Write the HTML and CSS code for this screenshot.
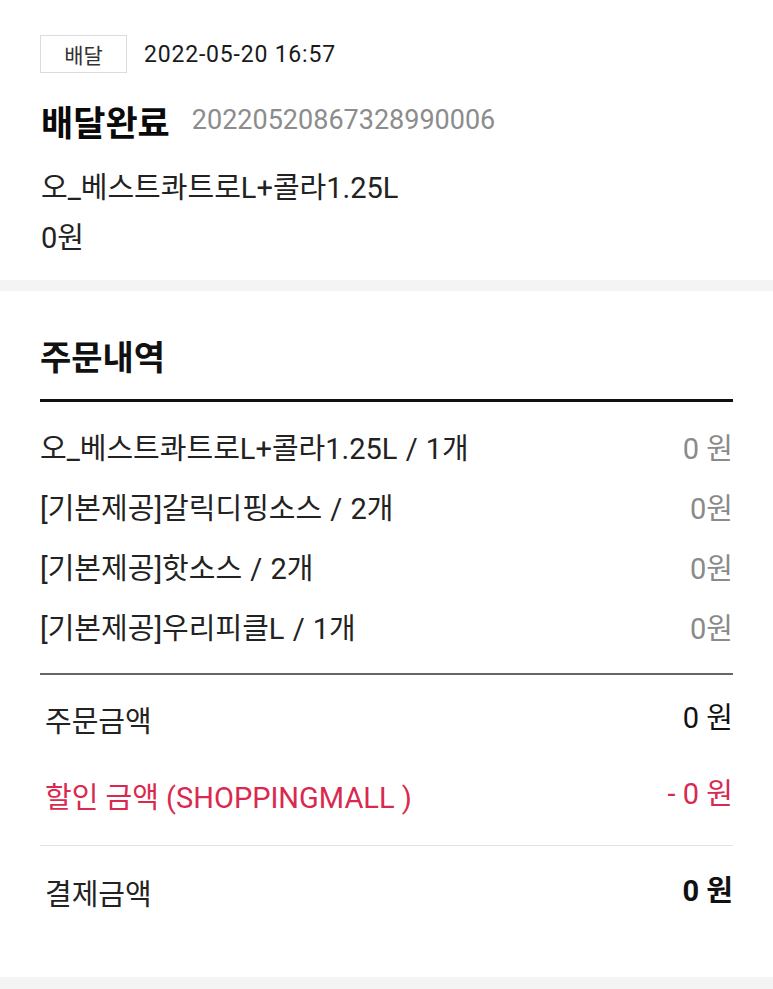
FILE: index.html
```html
<!DOCTYPE html>
<html lang="ko">
<head>
<meta charset="utf-8">
<link rel="stylesheet" href="styles.css">
</head>
<body>
<section class="summary-card">
  <div class="meta-row">
    <span class="badge">배달</span>
    <span class="date">2022-05-20 16:57</span>
  </div>
  <div class="status-row">
    <span class="status">배달완료</span>
    <span class="order-no">20220520867328990006</span>
  </div>
  <div class="product">오_베스트콰트로L+콜라1.25L</div>
  <div class="product-price">0원</div>
</section>
<div class="band"></div>
<section class="detail">
  <h2 class="detail-title">주문내역</h2>
  <ul class="items">
    <li class="item"><span class="item-name">오_베스트콰트로L+콜라1.25L / 1개</span><span class="item-price">0 원</span></li>
    <li class="item"><span class="item-name">[기본제공]갈릭디핑소스 / 2개</span><span class="item-price">0원</span></li>
    <li class="item"><span class="item-name">[기본제공]핫소스 / 2개</span><span class="item-price">0원</span></li>
    <li class="item"><span class="item-name">[기본제공]우리피클L / 1개</span><span class="item-price">0원</span></li>
  </ul>
  <div class="totals">
    <div class="total-row"><span class="t-label">주문금액</span><span class="t-value">0 원</span></div>
    <div class="total-row discount"><span class="t-label">할인 금액 (SHOPPINGMALL )</span><span class="t-value">- 0 원</span></div>
  </div>
  <div class="pay-row"><span class="t-label">결제금액</span><span class="t-value strong">0 원</span></div>
</section>
<div class="band bottom"></div>
</body>
</html>
```
FILE: styles.css
```css
* { box-sizing: border-box; }
html, body { margin: 0; padding: 0; background: #fff; }
body {
  font-family: Roboto, "Noto Sans CJK KR", "Noto Sans", sans-serif;
  color: #111;
  width: 773px;
}
.summary-card { padding: 35px 40px 0 41px; height: 280px; }
.meta-row { display: flex; align-items: center; height: 38px; }
.badge {
  display: flex; align-items: center; justify-content: center;
  width: 87px; height: 38px; margin-left: -1px;
  border: 1px solid #dcdcdc; font-size: 21px; color: #333;
}
.date { margin-left: 17px; font-size: 23px; color: #1a1a1a; letter-spacing: 0.8px; }
.status-row { display: flex; align-items: center; height: 50px; margin-top: 22px; }
.status { font-size: 35px; font-weight: 700; color: #0a0a0a; }
.order-no { margin-left: 22px; font-size: 27px; color: #8c8c8c; }
.product { margin-top: 16px; height: 48px; display: flex; align-items: center; font-size: 29px; color: #222; }
.product-price { margin-top: 2px; height: 48px; display: flex; align-items: center; font-size: 29px; color: #222; }
.band { height: 11px; background: #f4f4f4; }
.band.bottom { height: 12px; }
.detail { padding: 0 40px; height: 686px; }
.detail-title { margin: 0; padding-top: 47px; height: 108px; font-size: 34px; font-weight: 700; color: #111; line-height: 40px; }
.items { list-style: none; margin: 0; padding: 14px 0 17px; border-top: 3px solid #111; border-bottom: 2px solid #666; }
.item { display: flex; justify-content: space-between; align-items: center; height: 60px; }
.item-name { font-size: 29px; color: #222; letter-spacing: 0; word-spacing: 1px; }
.item-price { font-size: 29px; color: #8a8a8a; }
.totals { padding: 6px 0 12px; border-bottom: 1px solid #e3e3e3; }
.total-row { display: flex; justify-content: space-between; align-items: center; height: 76px; }
.t-label { font-size: 29px; color: #222; padding-left: 5px; }
.t-value { font-size: 29px; color: #111; margin-top: -8px; }
.discount .t-label, .discount .t-value { color: #d9294f; }
.pay-row { display: flex; justify-content: space-between; align-items: center; height: 92px; }
.t-value.strong { font-weight: 700; }
```
